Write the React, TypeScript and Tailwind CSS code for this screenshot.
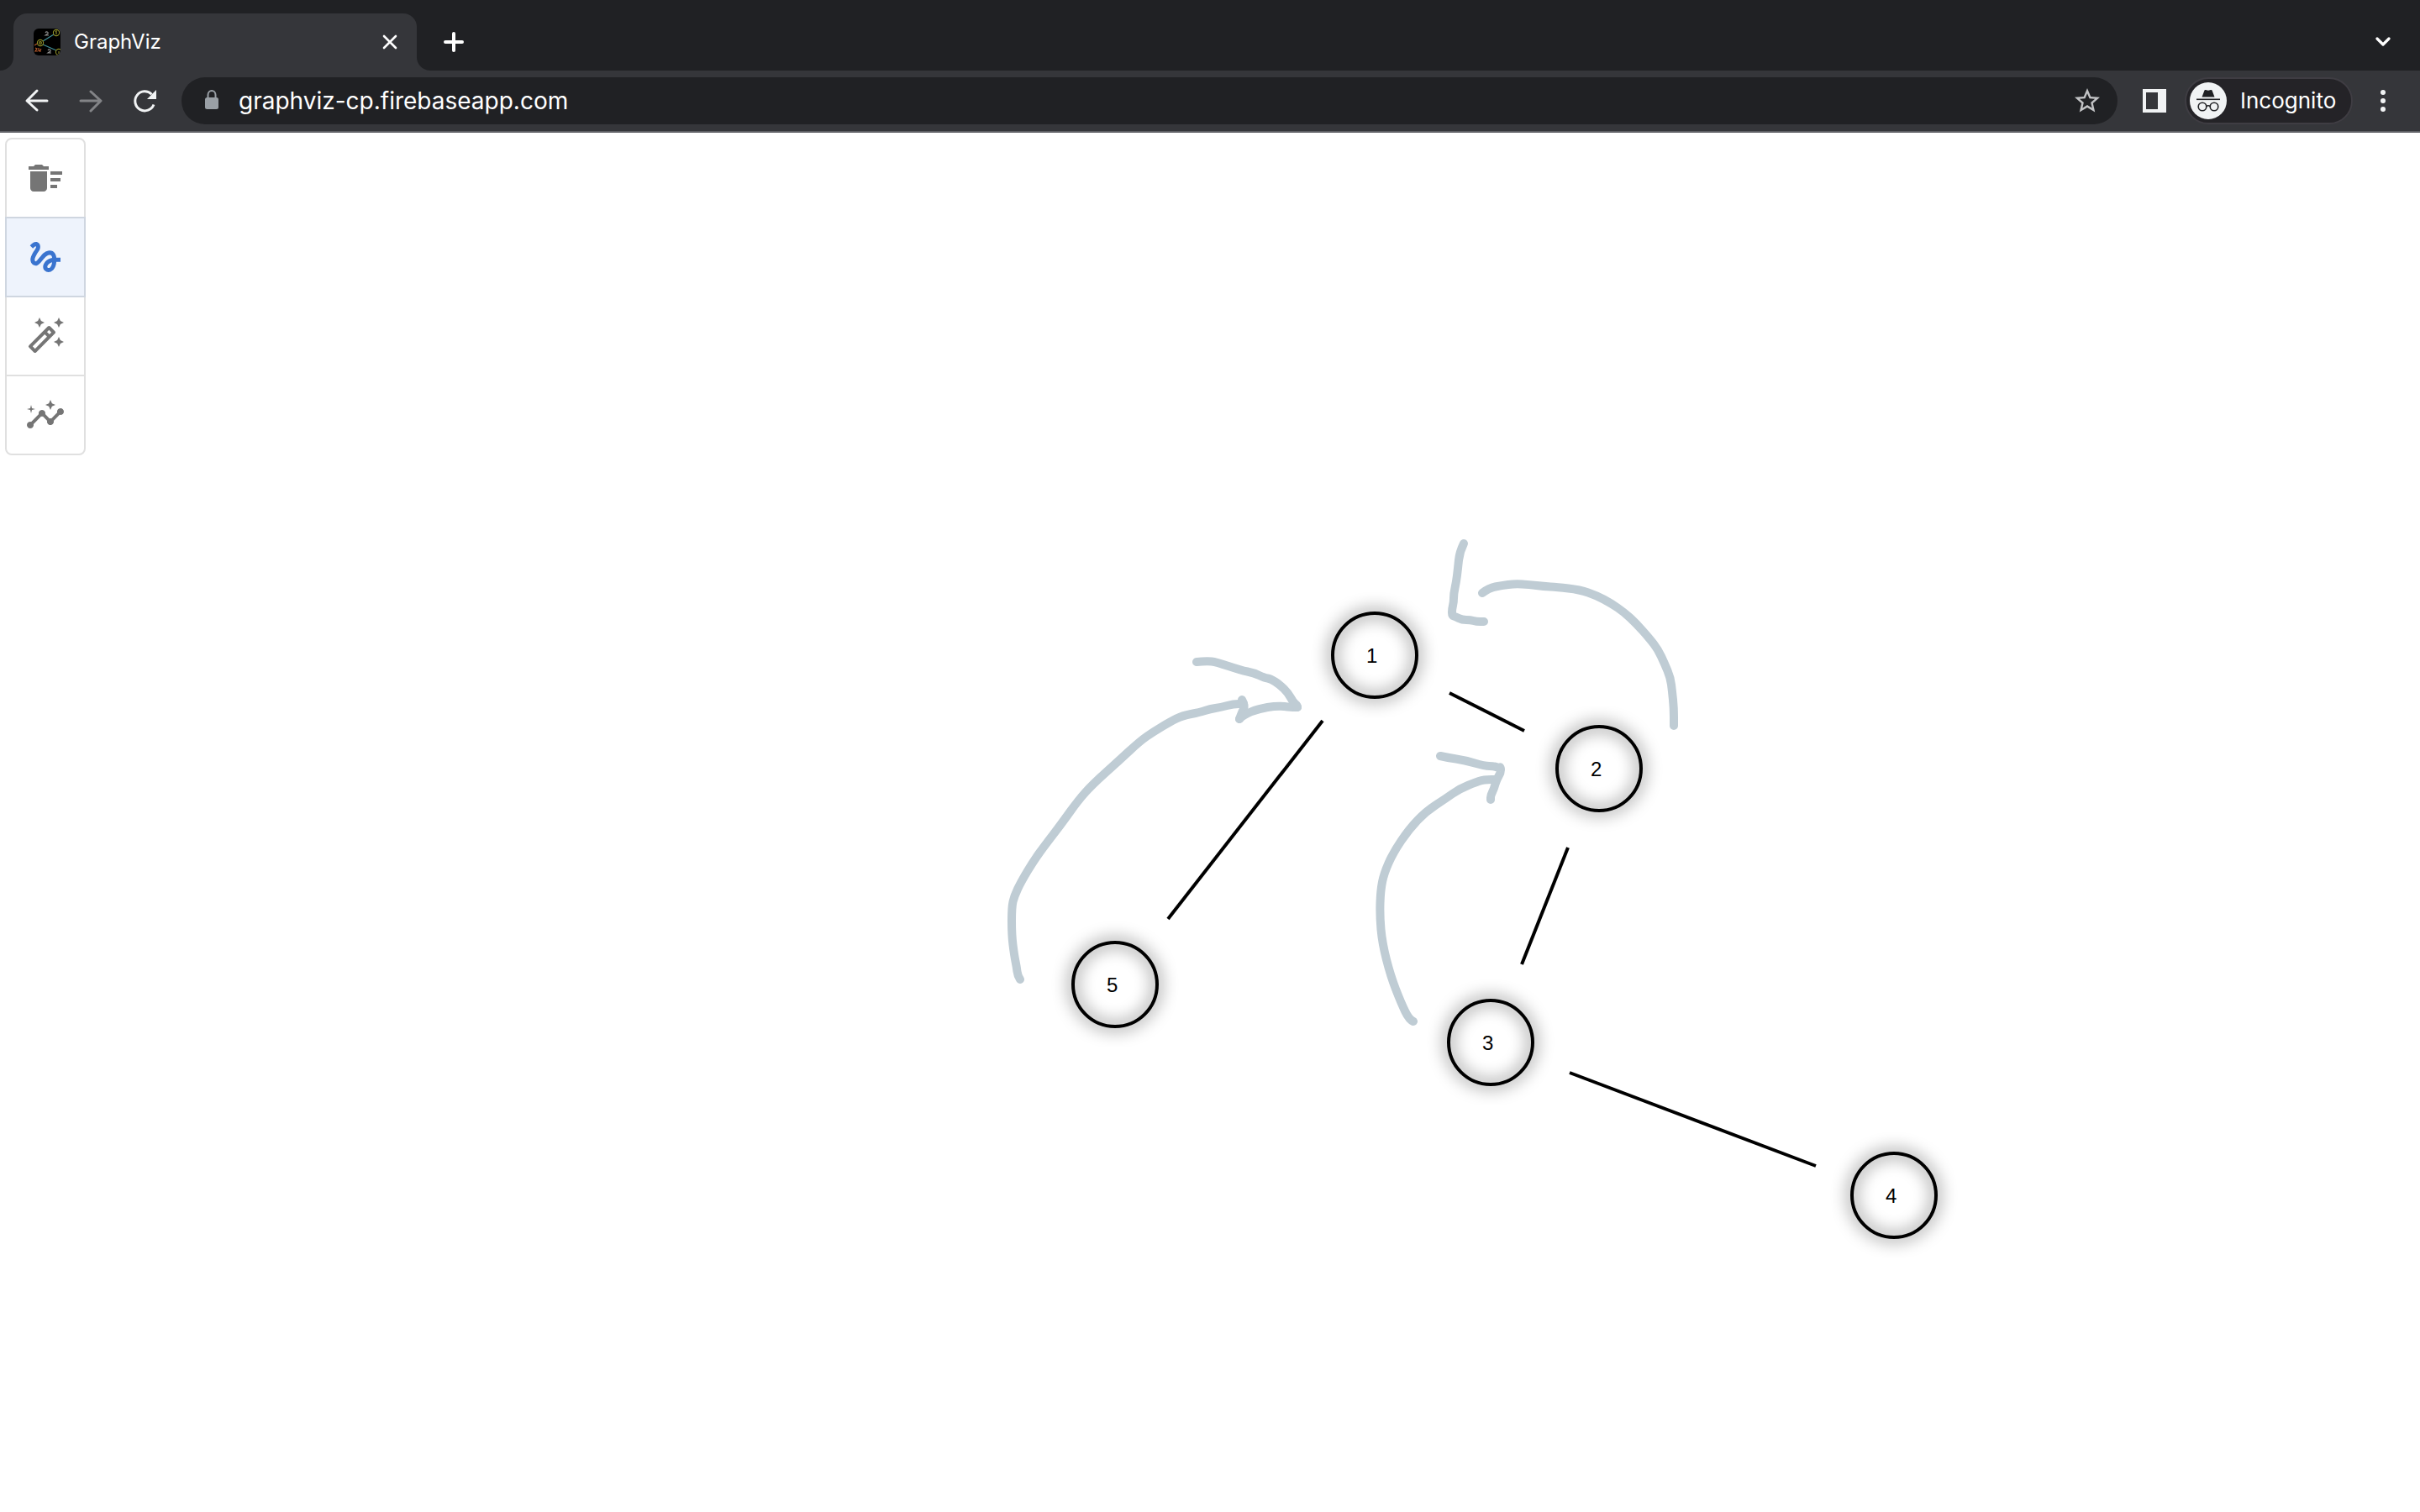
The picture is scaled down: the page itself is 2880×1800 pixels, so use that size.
import React from "react";
import { MdDeleteSweep, MdGesture, MdInsights, MdOutlineAutoFixHigh, MdStarBorder } from "react-icons/md";

type Point = [number, number];

const nodes = [
  { id: "1", x: 1636, y: 780 },
  { id: "2", x: 1903, y: 915 },
  { id: "3", x: 1774, y: 1241 },
  { id: "4", x: 2254, y: 1423 },
  { id: "5", x: 1327, y: 1172 },
];

const edges = [
  { x1: 1725, y1: 825, x2: 1814, y2: 870 },
  { x1: 1574, y1: 858, x2: 1390, y2: 1094 },
  { x1: 1866, y1: 1009, x2: 1811, y2: 1148 },
  { x1: 1868, y1: 1277, x2: 2161, y2: 1388 },
];

const strokes: Point[][] = [
  [[1742, 647], [1737, 657], [1735, 677], [1733, 693], [1730, 707], [1730, 717], [1728, 725], [1728, 733], [1732, 734], [1740, 738], [1750, 738], [1757, 740], [1766, 740]],
  [[1764, 706], [1772, 700], [1787, 697], [1803, 695], [1820, 696], [1837, 698], [1853, 699], [1880, 702], [1900, 709], [1917, 718], [1933, 729], [1947, 742], [1963, 760], [1973, 773], [1981, 790], [1988, 807], [1990, 823], [1992, 843], [1992, 864]],
  [[1214, 1166], [1211, 1161], [1210, 1152], [1207, 1137], [1204, 1113], [1204, 1080], [1207, 1067], [1215, 1050], [1230, 1025], [1243, 1007], [1263, 981], [1283, 953], [1300, 934], [1330, 907], [1357, 882], [1373, 871], [1393, 859], [1407, 852], [1428, 848], [1440, 844], [1453, 842], [1468, 838], [1480, 838]],
  [[1478, 833], [1482, 840], [1478, 848], [1475, 856]],
  [[1475, 856], [1480, 851], [1497, 844], [1520, 840], [1537, 842], [1544, 842]],
  [[1544, 842], [1544, 840], [1539, 836], [1533, 825], [1523, 815], [1512, 808], [1505, 807], [1492, 801], [1477, 798], [1447, 788], [1437, 787], [1424, 788]],
  [[1682, 1216], [1677, 1214], [1667, 1193], [1655, 1162], [1645, 1123], [1642, 1090], [1643, 1060], [1647, 1040], [1658, 1015], [1677, 987], [1697, 966], [1720, 951], [1737, 939], [1757, 931], [1763, 929], [1770, 928], [1780, 928]],
  [[1714, 900], [1723, 902], [1743, 905], [1767, 912], [1778, 912], [1783, 914], [1786, 913], [1786, 920], [1781, 928], [1778, 939], [1774, 947], [1774, 952]],
];

// Joins the midpoints of the sampled points with quadratic curves.
function smooth(points: Point[]): string {
  let d = `M${points[0][0]} ${points[0][1]}`;
  for (let i = 1; i < points.length - 1; i++) {
    const [x, y] = points[i];
    const [nx, ny] = points[i + 1];
    d += `Q${x} ${y} ${(x + nx) / 2} ${(y + ny) / 2}`;
  }
  const last = points[points.length - 1];
  return d + `L${last[0]} ${last[1]}`;
}

function Favicon() {
  return (
    <svg viewBox="0 0 32 32" className="size-8 shrink-0 rounded-md bg-black" fill="none" aria-hidden="true">
      <path d="M11 15 24 7M11 19l16 7" stroke="#3f8f98" strokeWidth="1.2" />
      <g stroke="#8f8f27" strokeWidth="1.1">
        <circle cx="8" cy="17" r="3.600" />
        <circle cx="8" cy="17" r="1.400" />
        <circle cx="27" cy="5" r="3.600" />
        <path d="M26 4l1-1v4" />
        <circle cx="30" cy="28" r="3.600" />
        <path d="M30 27v3" />
      </g>
      <path d="M14 5c1-2 4-1 3 1l-3 2 4 0M17 26c1-2 4-1 3 1l-3 2 4 0" stroke="#8f8f8f" strokeWidth="1.1" />
      <path d="M1 20l3-2M2 23l2 1-2 3h3M6 23v4M9 24l-2 3h2" stroke="#b0562a" strokeWidth="1.200" />
    </svg>
  );
}

function BackArrow() {
  return (
    <svg viewBox="0 0 32 32" className="size-8" fill="none" stroke="currentColor" strokeWidth="3" strokeLinecap="round" strokeLinejoin="round">
      <path d="M28 16H5M16 4 4 16l12 11" />
    </svg>
  );
}

function Toolbar() {
  return (
    <div className="flex h-[74px] items-center border-b-2 border-[#5f6065] bg-[#35363a] pr-2 pl-3 text-[#f1f3f4]">
      <button aria-label="Back" className="flex h-14 w-16 items-center justify-center"><BackArrow /></button>
      <button aria-label="Forward" className="flex h-14 w-16 rotate-180 items-center justify-center text-[#838487]"><BackArrow /></button>
      <button aria-label="Reload" className="flex h-14 w-16 items-center justify-center">
        <svg viewBox="0 0 32 32" className="size-8" fill="none">
          <path d="M27 20.5A11.5 11.5 0 1 1 24.5 8.300" stroke="currentColor" strokeWidth="3" />
          <path d="M30 3v11H19z" fill="currentColor" />
        </svg>
      </button>
      <div className="ml-3 flex h-14 min-w-0 flex-1 items-center rounded-full bg-[#202124] pr-[18px] pl-6">
        <svg viewBox="0 0 24 32" className="h-8 w-6 shrink-0" fill="none" aria-hidden="true">
          <path d="M7.500 13V9a4.500 5 0 0 1 9 0v4" stroke="#9aa0a6" strokeWidth="2" />
          <rect x="4" y="12" width="16" height="14" rx="2.500" fill="#9aa0a6" />
        </svg>
        <input
          aria-label="Address"
          defaultValue="graphviz-cp.firebaseapp.com"
          className="ml-5 min-w-0 flex-1 bg-transparent text-[28px] leading-9 text-white outline-none"
        />
        <button aria-label="Bookmark this page" className="text-[#c2c3c5]"><MdStarBorder className="size-9" /></button>
      </div>
      <button aria-label="Side panel" className="ml-4 flex h-14 w-14 items-center justify-center">
        <svg viewBox="0 0 28 28" className="size-7">
          <path fillRule="evenodd" d="M0 0h28v28H0zM4 4v20h14V4z" fill="currentColor" />
        </svg>
      </button>
      <button className="ml-2 flex h-14 w-[200px] items-center rounded-full border-2 border-[#3f3d43] bg-[#242327] pl-1 text-[26px] leading-9 text-white">
        <svg viewBox="0 0 44 44" className="size-11 shrink-0" fill="none" aria-hidden="true">
          <circle cx="22" cy="22" r="22" fill="#f1f3f4" />
          <path d="M14.500 17.500 17.500 9.500Q18 8.600 19 9l3 .8 3-.8q1-.4 1.500.5l3 8z" fill="#202124" />
          <path d="M8 20.300h28" stroke="#202124" strokeWidth="1.600" />
          <g stroke="#202124" strokeWidth="1.600">
            <circle cx="15" cy="29" r="4.800" />
            <circle cx="29" cy="29" r="4.800" />
            <path d="M19.500 28.500q2.500-1.400 5 0" />
          </g>
        </svg>
        <span className="ml-4">Incognito</span>
      </button>
      <button aria-label="Menu" className="flex h-14 w-[72px] items-center justify-center">
        <svg viewBox="0 0 8 28" className="h-7 w-2" fill="currentColor">
          <circle cx="4" cy="4" r="3" />
          <circle cx="4" cy="14" r="3" />
          <circle cx="4" cy="24" r="3" />
        </svg>
      </button>
    </div>
  );
}

function TabStrip() {
  return (
    <div className="flex h-[84px] items-end bg-[#202124] px-4 text-white">
      <div className="relative flex h-[68px] w-[480px] items-center rounded-t-2xl bg-[#35363a] pr-4 pl-6">
        <svg viewBox="0 0 16 16" className="absolute bottom-0 -left-4 size-4" aria-hidden="true">
          <path d="M16 0v16H0A16 16 0 0 0 16 0z" fill="#35363a" />
        </svg>
        <svg viewBox="0 0 16 16" className="absolute -right-4 bottom-0 size-4" aria-hidden="true">
          <path d="M0 0v16h16A16 16 0 0 1 0 0z" fill="#35363a" />
        </svg>
        <Favicon />
        <span className="ml-4 flex-1 text-2xl">GraphViz</span>
        <button aria-label="Close tab" className="flex size-8 items-center justify-center">
          <svg viewBox="0 0 16 16" className="size-4 overflow-visible" stroke="currentColor" strokeWidth="2.600" strokeLinecap="round">
            <path d="M1 1l14 14M15 1 1 15" />
          </svg>
        </button>
      </div>
      <button aria-label="New tab" className="ml-4 flex h-[68px] w-14 items-center justify-center">
        <svg viewBox="0 0 24 24" className="size-6" stroke="currentColor" strokeWidth="4" strokeLinecap="round">
          <path d="M12 2v20M2 12h20" />
        </svg>
      </button>
      <button aria-label="Search tabs" className="ml-auto flex h-[68px] w-14 items-center justify-center">
        <svg viewBox="0 0 20 12" className="h-3 w-5" fill="none" stroke="currentColor" strokeWidth="3.200" strokeLinecap="round" strokeLinejoin="round">
          <path d="M3 2l7 7 7-7" />
        </svg>
      </button>
    </div>
  );
}

function Tools() {
  return (
    <div role="group" aria-label="Tools" className="relative m-1.5 flex w-24 flex-col rounded-lg border-2 border-[#e0e0e0] text-[#757575]">
      <button aria-label="Clear" className="flex h-[92px] items-center justify-center"><MdDeleteSweep className="size-12" /></button>
      <button aria-label="Draw" aria-pressed="true" className="-mx-0.5 flex h-24 items-center justify-center border-2 border-[#cfd6e0] bg-[#eef3fc] text-[#3a74cf]"><MdGesture className="size-12" /></button>
      <button aria-label="Auto layout" className="flex h-[92px] items-center justify-center"><MdOutlineAutoFixHigh className="size-12" /></button>
      <button aria-label="Insights" className="flex h-[94px] items-center justify-center border-t-2 border-[#e0e0e0]"><MdInsights className="size-12" /></button>
    </div>
  );
}

function GraphCanvas() {
  return (
    <svg viewBox="0 158 2880 1642" preserveAspectRatio="xMinYMin meet" className="absolute inset-0 size-full" role="img" aria-label="Graph with five nodes">
      <defs>
        <filter id="glow" x="-50%" y="-50%" width="200%" height="200%" colorInterpolationFilters="sRGB">
          <feDropShadow dx="0" dy="0" stdDeviation="10" floodColor="#000" floodOpacity="1" />
        </filter>
      </defs>
      <g stroke="#000" strokeWidth="4">
        {edges.map((e) => <line key={`${e.x1}-${e.y1}`} {...e} />)}
      </g>
      {nodes.map((n) => (
        <g key={n.id}>
          <circle cx={n.x} cy={n.y} r="50" fill="none" stroke="#000" strokeWidth="4" filter="url(#glow)" />
          <text x={n.x - 10} y={n.y + 9} className="fill-black font-['Liberation_Sans',sans-serif] text-2xl">{n.id}</text>
        </g>
      ))}
      <g fill="none" stroke="#bfccd4" strokeWidth="10" strokeLinecap="round" strokeLinejoin="round">
        {strokes.map((s, i) => <path key={i} d={smooth(s)} />)}
      </g>
    </svg>
  );
}

export default function App() {
  return (
    <div className="flex min-h-screen flex-col bg-white font-['Inter',sans-serif]">
      <TabStrip />
      <Toolbar />
      <main className="relative flex-1">
        <GraphCanvas />
        <Tools />
      </main>
    </div>
  );
}
